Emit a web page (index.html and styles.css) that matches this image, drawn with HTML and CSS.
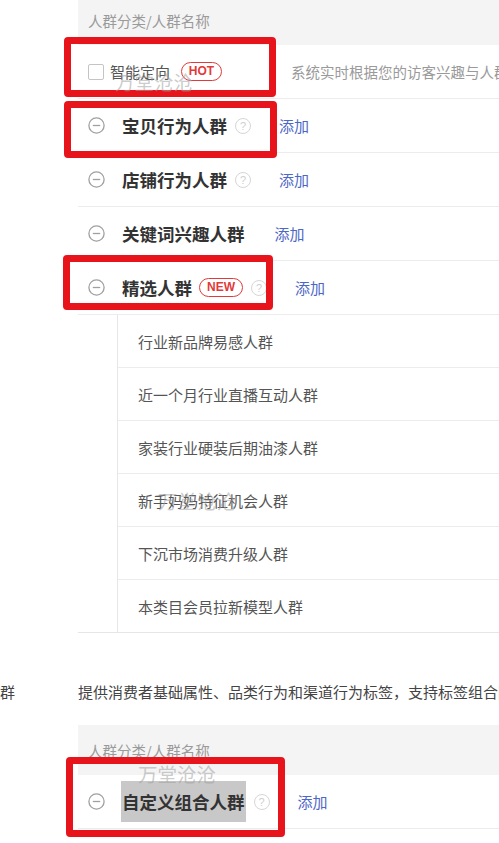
FILE: index.html
```html
<!DOCTYPE html>
<html lang="zh-CN">
<head>
<meta charset="utf-8">
<title>人群</title>
<link rel="stylesheet" href="styles.css">
</head>
<body>
<div class="page">
  <div class="block block-top">
    <div class="table">
      <div class="thead">人群分类/人群名称</div>
      <div class="row">
        <span class="checkbox"></span>
        <span class="name-light">智能定向</span>
        <span class="badge badge-hot">HOT</span>
        <span class="desc">系统实时根据您的访客兴趣与人群特征智能推荐</span>
      </div>
      <div class="row">
        <svg class="minus" viewBox="0 0 17 17"><circle cx="8.5" cy="8.5" r="7.6" fill="none" stroke="#a0a0a0" stroke-width="1.3"/><line x1="4.8" y1="8.5" x2="12.2" y2="8.5" stroke="#a0a0a0" stroke-width="1.3"/></svg>
        <span class="name">宝贝行为人群</span>
        <span class="help">?</span>
        <span class="add">添加</span>
      </div>
      <div class="row">
        <svg class="minus" viewBox="0 0 17 17"><circle cx="8.5" cy="8.5" r="7.6" fill="none" stroke="#a0a0a0" stroke-width="1.3"/><line x1="4.8" y1="8.5" x2="12.2" y2="8.5" stroke="#a0a0a0" stroke-width="1.3"/></svg>
        <span class="name">店铺行为人群</span>
        <span class="help">?</span>
        <span class="add">添加</span>
      </div>
      <div class="row">
        <svg class="minus" viewBox="0 0 17 17"><circle cx="8.5" cy="8.5" r="7.6" fill="none" stroke="#a0a0a0" stroke-width="1.3"/><line x1="4.8" y1="8.5" x2="12.2" y2="8.5" stroke="#a0a0a0" stroke-width="1.3"/></svg>
        <span class="name">关键词兴趣人群</span>
        <span class="add add-wide">添加</span>
      </div>
      <div class="row">
        <svg class="minus" viewBox="0 0 17 17"><circle cx="8.5" cy="8.5" r="7.6" fill="none" stroke="#a0a0a0" stroke-width="1.3"/><line x1="4.8" y1="8.5" x2="12.2" y2="8.5" stroke="#a0a0a0" stroke-width="1.3"/></svg>
        <span class="name">精选人群</span>
        <span class="badge badge-new">NEW</span>
        <span class="help">?</span>
        <span class="add">添加</span>
      </div>
      <div class="group">
        <div class="sublist">
          <div class="subrow">行业新品牌易感人群</div>
          <div class="subrow">近一个月行业直播互动人群</div>
          <div class="subrow">家装行业硬装后期油漆人群</div>
          <div class="subrow">新手妈妈特征机会人群</div>
          <div class="subrow">下沉市场消费升级人群</div>
          <div class="subrow">本类目会员拉新模型人群</div>
        </div>
      </div>
    </div>
  </div>

  <div class="block block-bottom">
    <div class="label">群</div>
    <div class="content">
      <div class="intro">提供消费者基础属性、品类行为和渠道行为标签，支持标签组合圈选人群</div>
      <div class="table">
        <div class="thead">人群分类/人群名称</div>
        <div class="row">
          <svg class="minus" viewBox="0 0 17 17"><circle cx="8.5" cy="8.5" r="7.6" fill="none" stroke="#a0a0a0" stroke-width="1.3"/><line x1="4.8" y1="8.5" x2="12.2" y2="8.5" stroke="#a0a0a0" stroke-width="1.3"/></svg>
          <span class="name selected">自定义组合人群</span>
          <span class="help">?</span>
          <span class="add">添加</span>
        </div>
      </div>
    </div>
  </div>

  <div class="mark mark-1"></div>
  <div class="mark mark-2"></div>
  <div class="mark mark-3"></div>
  <div class="mark mark-4"></div>

  <div class="wm wm-1">万堂沧沧</div>
  <div class="wm wm-2">万堂沧沧</div>
  <div class="wm wm-3">万堂沧沧</div>
</div>
</body>
</html>
```

FILE: styles.css
```css
* { box-sizing: border-box; }

html, body {
  margin: 0;
  padding: 0;
  background: #ffffff;
}

body {
  font-family: "Noto Sans CJK SC", "Noto Sans", "Liberation Sans", sans-serif;
  color: #333333;
  overflow: hidden;
}

.page {
  position: relative;
  width: 499px;
  height: 843px;
  overflow: hidden;
}

.block-top {
  margin-top: -5px;
  padding-left: 78px;
}

.table {
  width: 100%;
}

.thead {
  height: 50px;
  display: flex;
  align-items: center;
  padding-left: 10px;
  background: #f4f4f4;
  color: #9a9a9a;
  font-size: 14.5px;
  white-space: nowrap;
}

.row {
  height: 54px;
  display: flex;
  align-items: center;
  padding-left: 10px;
  border-bottom: 1px solid #ececec;
  white-space: nowrap;
  overflow: hidden;
}

.checkbox {
  width: 16px;
  height: 16px;
  border: 1px solid #c4c4c4;
  border-radius: 2px;
  margin-right: 6px;
  flex: none;
}

.name-light {
  font-size: 15px;
  color: #555555;
}

.badge {
  flex: none;
  height: 19px;
  border: 1.5px solid #e23a3a;
  border-radius: 10px;
  color: #e23a3a;
  font-weight: 700;
  font-size: 12px;
  line-height: 16px;
  text-align: center;
  font-family: "Liberation Sans", "Noto Sans", sans-serif;
}

.badge-hot {
  width: 41px;
  margin-left: 11px;
}

.badge-new {
  width: 44px;
  margin-left: 7px;
}

.desc {
  margin-left: 69px;
  font-size: 14.5px;
  color: #9a9a9a;
}

.minus {
  width: 17px;
  height: 17px;
  flex: none;
  margin-right: 17px;
}

.name {
  font-size: 17.5px;
  font-weight: 700;
  color: #333333;
}

.selected {
  display: inline-block;
  line-height: 41px;
  background: #c8c8c8;
  margin-left: -1px;
  padding-left: 1px;
  padding-right: 1px;
}

.help {
  flex: none;
  width: 16px;
  height: 16px;
  margin-left: 8px;
  border: 1px solid #d6d6d6;
  border-radius: 50%;
  color: #cfcfcf;
  font-size: 11px;
  line-height: 14px;
  text-align: center;
  font-family: "Liberation Sans", sans-serif;
}

.add {
  margin-left: 28px;
  font-size: 15px;
  color: #4e67c6;
}

.add-wide {
  margin-left: 30px;
}

.group {
  border-bottom: 1px solid #e6e6e6;
}

.sublist {
  margin-left: 39px;
  border-left: 1px solid #e6e6e6;
}

.subrow {
  height: 53px;
  display: flex;
  align-items: center;
  padding-left: 20px;
  border-bottom: 1px solid #ececec;
  font-size: 15px;
  color: #555555;
  white-space: nowrap;
}

.subrow:last-child {
  height: 52px;
  border-bottom: none;
}

.block-bottom {
  display: flex;
  margin-top: 48px;
}

.label {
  width: 78px;
  flex: none;
  font-size: 15px;
  line-height: 22px;
  color: #444444;
}

.content {
  flex: 1;
  min-width: 0;
}

.intro {
  font-size: 15px;
  line-height: 22px;
  color: #444444;
  white-space: nowrap;
  overflow: hidden;
  margin-bottom: 22px;
}

.mark {
  position: absolute;
  border: 7px solid #e8141c;
  border-radius: 4px;
}

.mark-1 { left: 64px; top: 37px; width: 212px; height: 60px; }
.mark-2 { left: 64px; top: 101px; width: 213px; height: 57px; }
.mark-3 { left: 63px; top: 255px; width: 210px; height: 55px; }
.mark-4 { left: 66px; top: 757px; width: 219px; height: 80px; }

.wm {
  position: absolute;
  font-size: 19.5px;
  line-height: 22px;
  color: rgba(160, 160, 160, 0.55);
  white-space: nowrap;
  pointer-events: none;
}

.wm-1 { left: 115px; top: 71px; }
.wm-2 { left: 158px; top: 490px; }
.wm-3 { left: 138px; top: 763px; }
```
